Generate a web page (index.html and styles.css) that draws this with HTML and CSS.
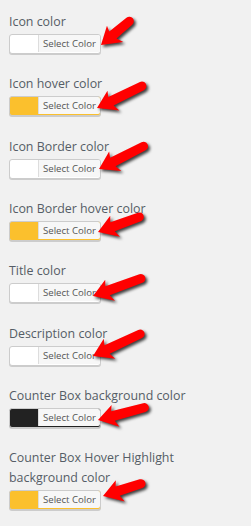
FILE: index.html
```html
<!DOCTYPE html>
<html lang="en">
<head>
  <meta charset="UTF-8">
  <meta name="viewport" content="width=device-width, initial-scale=1.0">
  <title>Counter Box Colors</title>
  <link rel="stylesheet" href="styles.css">
</head>
<body>
  <div class="settings">

    <!-- Icon color -->
    <div class="field">
      <label class="field-label">Icon color</label>
      <div class="picker">
        <button class="color-btn swatch-white"><span>Select Color</span></button>
        <svg class="pointer" viewBox="0 0 160 60"><g transform="translate(92 41) rotate(-40)"><path d="M0 0 L17 -11 L15 -5 L37 -4.5 A4.5 4.5 0 0 1 37 4.5 L16 5 L19 12 Z"/></g></svg>
      </div>
    </div>

    <!-- Icon hover color -->
    <div class="field">
      <label class="field-label">Icon hover color</label>
      <div class="picker">
        <button class="color-btn swatch-yellow"><span>Select Color</span></button>
        <svg class="pointer" viewBox="0 0 160 60"><g transform="translate(88 42) rotate(-26)"><path d="M0 0 L17 -11 L15 -5 L50 -4.5 A4.5 4.5 0 0 1 50 4.5 L16 5 L19 12 Z"/></g></svg>
      </div>
    </div>

    <!-- Icon Border color -->
    <div class="field">
      <label class="field-label">Icon Border color</label>
      <div class="picker">
        <button class="color-btn swatch-white"><span>Select Color</span></button>
        <svg class="pointer" viewBox="0 0 160 60"><g transform="translate(90 40) rotate(-27)"><path d="M0 0 L17 -11 L15 -5 L50 -4.5 A4.5 4.5 0 0 1 50 4.5 L16 5 L19 12 Z"/></g></svg>
      </div>
    </div>

    <!-- Icon Border hover color -->
    <div class="field">
      <label class="field-label">Icon Border hover color</label>
      <div class="picker">
        <button class="color-btn swatch-yellow"><span>Select Color</span></button>
        <svg class="pointer" viewBox="0 0 160 60"><g transform="translate(89 41) rotate(-20)"><path d="M0 0 L17 -11 L15 -5 L44 -4.5 A4.5 4.5 0 0 1 44 4.5 L16 5 L19 12 Z"/></g></svg>
      </div>
    </div>

    <!-- Title color -->
    <div class="field">
      <label class="field-label">Title color</label>
      <div class="picker">
        <button class="color-btn swatch-white"><span>Select Color</span></button>
        <svg class="pointer" viewBox="0 0 160 60"><g transform="translate(84 43) rotate(-20)"><path d="M0 0 L17 -11 L15 -5 L51 -4.5 A4.5 4.5 0 0 1 51 4.5 L16 5 L19 12 Z"/></g></svg>
      </div>
    </div>

    <!-- Description color -->
    <div class="field">
      <label class="field-label">Description color</label>
      <div class="picker">
        <button class="color-btn swatch-white"><span>Select Color</span></button>
        <svg class="pointer" viewBox="0 0 160 60"><g transform="translate(84 40) rotate(-25)"><path d="M0 0 L17 -11 L15 -5 L52 -4.5 A4.5 4.5 0 0 1 52 4.5 L16 5 L19 12 Z"/></g></svg>
      </div>
    </div>

    <!-- Counter Box background color -->
    <div class="field">
      <label class="field-label">Counter Box background color</label>
      <div class="picker">
        <button class="color-btn swatch-black"><span>Select Color</span></button>
        <svg class="pointer" viewBox="0 0 160 60"><g transform="translate(89 42) rotate(-15)"><path d="M0 0 L17 -11 L15 -5 L48 -4.5 A4.5 4.5 0 0 1 48 4.5 L16 5 L19 12 Z"/></g></svg>
      </div>
    </div>

    <!-- Counter Box Hover Highlight background color -->
    <div class="field">
      <label class="field-label">Counter Box Hover Highlight background color</label>
      <div class="picker">
        <button class="color-btn swatch-yellow"><span>Select Color</span></button>
        <svg class="pointer" viewBox="0 0 160 60"><g transform="translate(94 36) rotate(-18)"><path d="M0 0 L17 -11 L15 -5 L40 -4.5 A4.5 4.5 0 0 1 40 4.5 L16 5 L19 12 Z"/></g></svg>
      </div>
    </div>

  </div>
</body>
</html>
```
FILE: styles.css
```css
/* Page */
body {
  margin: 0;
  background: #f1f1f1;
  font-family: "Open Sans", "Noto Sans", sans-serif;
  color: #555d66;
}

.settings {
  padding: 11px 0 0 9px;
  width: 200px;
}

/* Fields */
.field {
  margin-bottom: 19.33px;
}

.field-label {
  display: block;
  font-size: 12.4px;
  line-height: 20px;
  margin-bottom: 3px;
  padding-top: 1px;
  height: auto;
}

.picker {
  position: relative;
  width: 92px;
  height: 20px;
  margin-top: -1px;
}

/* Color picker button */
.color-btn {
  display: flex;
  justify-content: flex-end;
  box-sizing: border-box;
  width: 92px;
  height: 20px;
  margin: 0;
  padding: 0 0 1px 28px;
  border: 1px solid #ccc;
  border-radius: 3px;
  box-shadow: 0 1px 0 #ccc;
  cursor: pointer;
}

.color-btn span {
  flex: 1;
  background: #f7f7f7;
  border-left: 1px solid #ddd;
  border-radius: 0 2px 2px 0;
  font-family: "Open Sans", "Noto Sans", sans-serif;
  font-size: 9.6px;
  line-height: 17px;
  color: #555;
  text-align: center;
}

.swatch-white { background: #fff; }
.swatch-yellow { background: #fbc02d; }
.swatch-black { background: #222; }

/* Red annotation arrows */
.pointer {
  position: absolute;
  left: 0;
  top: -30px;
  width: 160px;
  height: 60px;
  overflow: visible;
  pointer-events: none;
  fill: #f00;
  filter: drop-shadow(2px 2px 1.5px rgba(0, 0, 0, 0.75));
}
```
